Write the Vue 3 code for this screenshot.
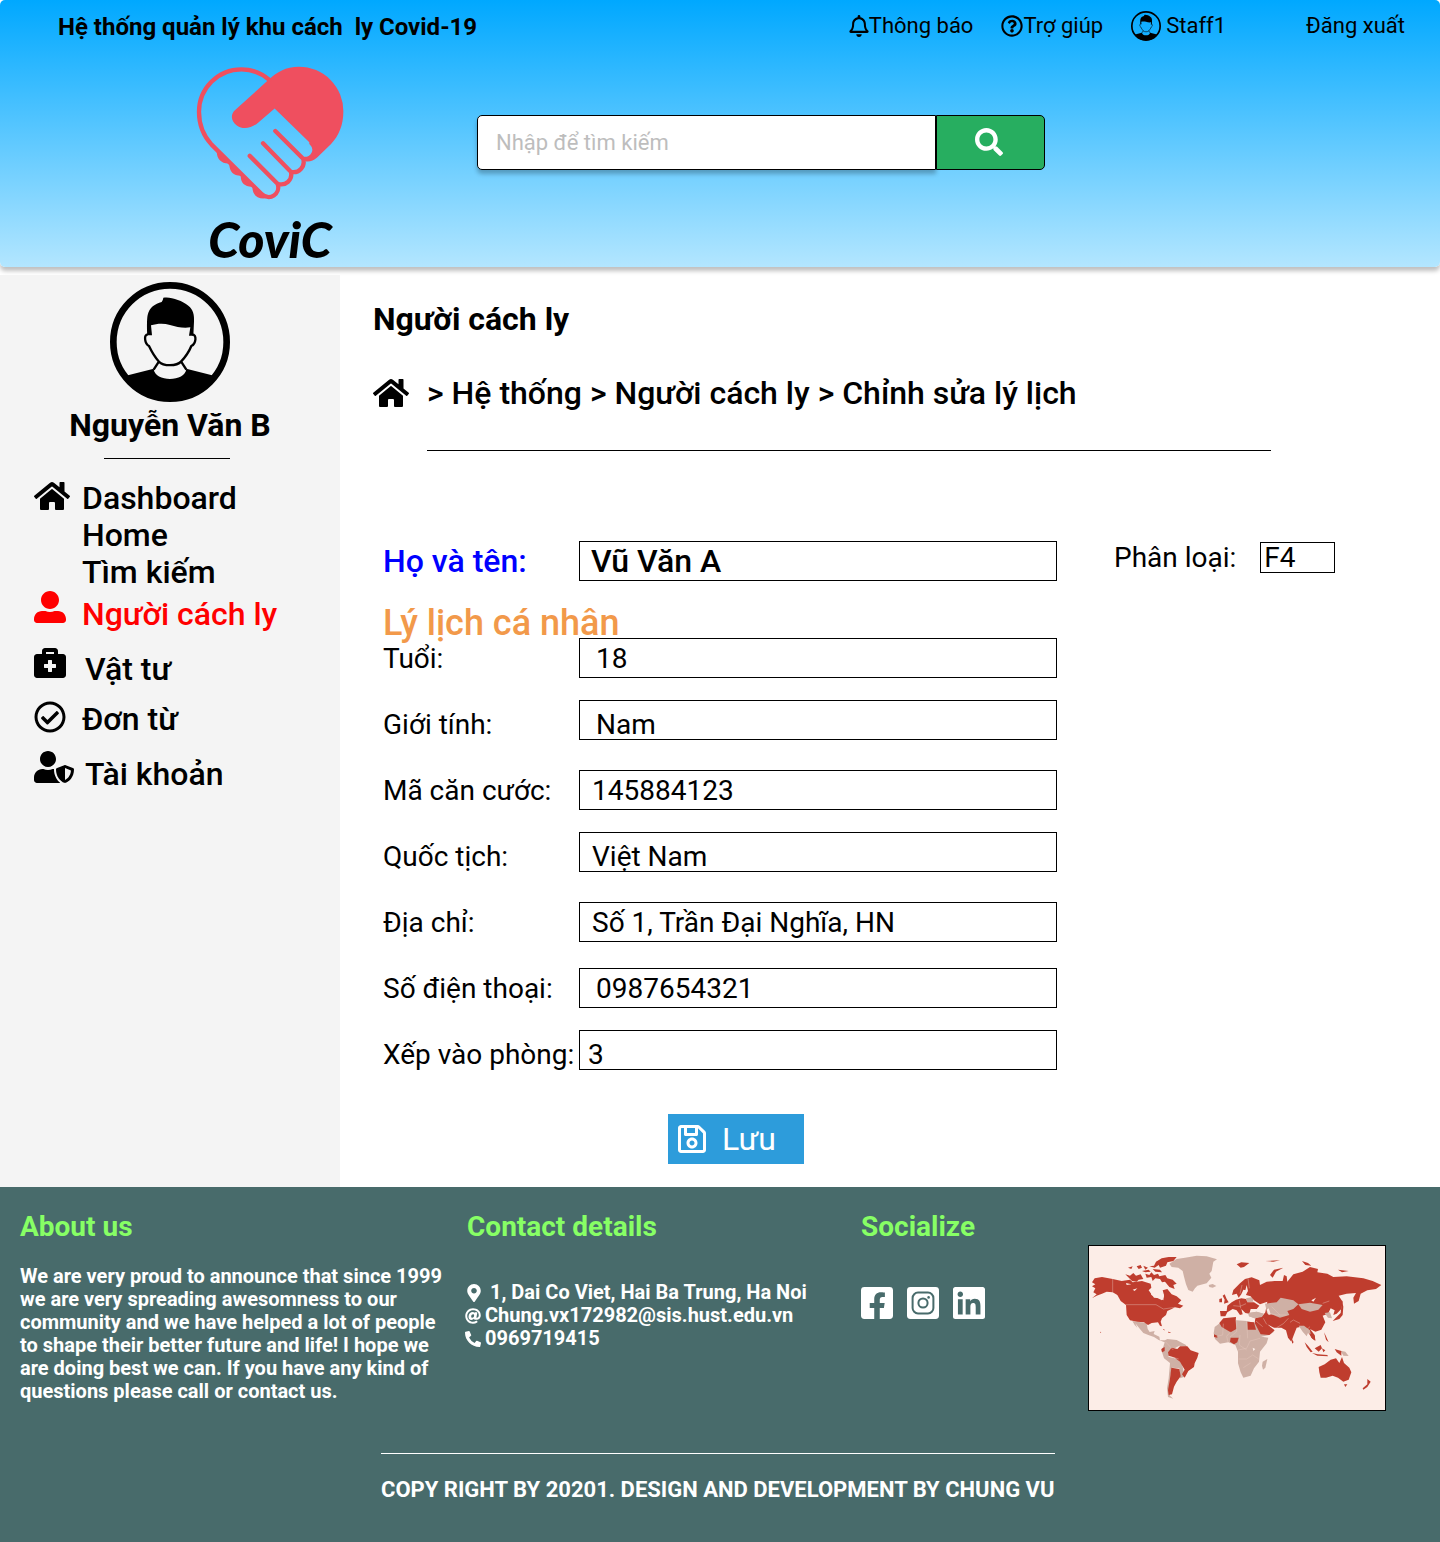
<script setup>
import { ref, reactive } from 'vue'

const icons = {
  bell: { box: '0 0 448 512', d: 'M439.39 362.29c-19.32-20.76-55.47-51.99-55.47-154.29 0-77.7-54.48-139.9-127.94-155.16V32c0-17.67-14.32-32-31.98-32s-31.98 14.33-31.98 32v20.84C118.56 68.1 64.08 130.3 64.08 208c0 102.3-36.15 133.53-55.47 154.29-6 6.45-8.66 14.16-8.61 21.71.11 16.4 12.98 32 32.1 32h383.8c19.12 0 32-15.6 32.1-32 .05-7.55-2.61-15.27-8.61-21.71zM67.53 368c21.22-27.97 44.42-74.33 44.53-159.42 0-.2-.06-.38-.06-.58 0-61.86 50.14-112 112-112s112 50.14 112 112c0 .2-.06.38-.06.58.11 85.1 23.31 131.46 44.53 159.42H67.53zM224 512c35.32 0 63.97-28.65 63.97-64H160.03c0 35.35 28.65 64 63.97 64z' },
  help: { box: '0 0 512 512', d: 'M256 8C119.043 8 8 119.083 8 256c0 136.997 111.043 248 248 248s248-111.003 248-248C504 119.083 392.957 8 256 8zm0 448c-110.532 0-200-89.431-200-200 0-110.495 89.472-200 200-200 110.491 0 200 89.471 200 200 0 110.53-89.431 200-200 200zm107.244-255.2c0 67.052-72.421 68.084-72.421 92.863V300c0 6.627-5.373 12-12 12h-45.647c-6.627 0-12-5.373-12-12v-8.659c0-35.745 27.1-50.034 47.579-61.516 17.561-9.845 28.324-16.541 28.324-29.579 0-17.246-21.999-28.693-39.784-28.693-23.189 0-33.894 10.977-48.942 29.969-4.057 5.12-11.46 6.071-16.666 2.124l-27.824-21.098c-5.107-3.872-6.251-11.066-2.644-16.363C184.846 131.491 214.94 112 261.794 112c49.071 0 101.45 38.304 101.45 88.8zM298 368c0 23.159-18.841 42-42 42s-42-18.841-42-42 18.841-42 42-42 42 18.841 42 42z' },
  search: { box: '0 0 512 512', d: 'M505 442.7L405.3 343c-4.5-4.5-10.6-7-17-7H372c27.6-35.3 44-79.7 44-128C416 93.1 322.9 0 208 0S0 93.1 0 208s93.1 208 208 208c48.3 0 92.7-16.4 128-44v16.3c0 6.4 2.5 12.5 7 17l99.7 99.7c9.4 9.4 24.6 9.4 33.9 0l28.3-28.3c9.4-9.4 9.4-24.6.1-34zM208 336c-70.7 0-128-57.2-128-128 0-70.7 57.2-128 128-128 70.7 0 128 57.2 128 128 0 70.7-57.2 128-128 128z' },
  home: { box: '0 0 576 512', d: 'M280.37 148.26L96 300.11V464a16 16 0 0 0 16 16l112.06-.29a16 16 0 0 0 15.92-16V368a16 16 0 0 1 16-16h64a16 16 0 0 1 16 16v95.64a16 16 0 0 0 16 16.05L464 480a16 16 0 0 0 16-16V300L295.67 148.26a12.19 12.19 0 0 0-15.3 0zM571.6 251.47L488 182.56V44.05a12 12 0 0 0-12-12h-56a12 12 0 0 0-12 12v72.61L318.47 43a48 48 0 0 0-61 0L4.34 251.47a12 12 0 0 0-1.6 16.9l25.5 31A12 12 0 0 0 45.15 301l235.22-193.74a12.19 12.19 0 0 1 15.3 0L530.9 301a12 12 0 0 0 16.9-1.6l25.5-31a12 12 0 0 0-1.7-16.93z' },
  user: { box: '0 0 512 512', d: 'M256 288c79.5 0 144-64.5 144-144S335.5 0 256 0 112 64.5 112 144s64.5 144 144 144zm128 32h-55.1c-22.2 10.2-46.9 16-72.9 16s-50.6-5.8-72.9-16H128C57.3 320 0 377.3 0 448v16c0 26.5 21.5 48 48 48h416c26.5 0 48-21.5 48-48v-16c0-70.7-57.3-128-128-128z' },
  medical: { box: '0 0 512 512', d: 'M464 128h-80V80c0-26.5-21.5-48-48-48H176c-26.5 0-48 21.5-48 48v48H48c-26.5 0-48 21.5-48 48v288c0 26.5 21.5 48 48 48h416c26.5 0 48-21.5 48-48V176c0-26.5-21.5-48-48-48zM192 96h128v32H192V96zm160 248c0 4.4-3.6 8-8 8h-56v56c0 4.4-3.6 8-8 8h-48c-4.4 0-8-3.6-8-8v-56h-56c-4.4 0-8-3.6-8-8v-48c0-4.4 3.6-8 8-8h56v-56c0-4.4 3.6-8 8-8h48c4.4 0 8 3.6 8 8v56h56c4.4 0 8 3.6 8 8v48z' },
  check: { box: '0 0 512 512', d: 'M256 8C119.033 8 8 119.033 8 256s111.033 248 248 248 248-111.033 248-248S392.967 8 256 8zm0 48c110.532 0 200 89.451 200 200 0 110.532-89.451 200-200 200-110.532 0-200-89.451-200-200 0-110.532 89.451-200 200-200m140.204 130.267l-22.536-22.718c-4.667-4.705-12.265-4.736-16.97-.068L215.346 303.697l-59.792-60.277c-4.667-4.705-12.265-4.736-16.97-.069l-22.719 22.536c-4.705 4.667-4.736 12.265-.068 16.971l90.781 91.516c4.667 4.705 12.265 4.736 16.97.068l172.589-171.204c4.704-4.668 4.734-12.266.067-16.971z' },
  shield: { box: '0 0 640 512', d: 'M622.3 271.1l-115.2-45c-4.1-1.6-12.6-3.7-22.2 0l-115.2 45c-10.7 4.2-17.7 14-17.7 24.9 0 111.6 68.7 188.8 132.9 213.9 9.6 3.7 18 1.6 22.2 0C558.4 489.9 640 420.5 640 296c0-10.9-7-20.7-17.7-24.9zM496 462.4V273.3l95.5 37.3c-5.6 87.1-60.9 135.4-95.5 151.8zM224 256c70.7 0 128-57.3 128-128S294.7 0 224 0 96 57.3 96 128s57.3 128 128 128zm96 40c0-2.5.8-4.8 1.1-7.2-2.5-.1-4.9-.8-7.5-.8h-16.7c-22.2 10.2-46.9 16-72.9 16s-50.6-5.8-72.9-16h-16.7C60.2 288 0 348.2 0 422.4V464c0 26.5 21.5 48 48 48h352c6.8 0 13.3-1.5 19.2-4-54-42.9-99.2-116.7-99.2-212z' },
  save: { box: '0 32 448 448', d: 'M433.941 129.941l-83.882-83.882A48 48 0 0 0 316.118 32H48C21.49 32 0 53.49 0 80v352c0 26.51 21.49 48 48 48h352c26.51 0 48-21.49 48-48V163.882a48 48 0 0 0-14.059-33.941zM272 80v80H144V80h128zm122 352H54a6 6 0 0 1-6-6V86a6 6 0 0 1 6-6h42v104c0 13.255 10.745 24 24 24h176c13.255 0 24-10.745 24-24V83.882l78.243 78.243a6 6 0 0 1 1.757 4.243V426a6 6 0 0 1-6 6zM224 232c-48.523 0-88 39.477-88 88s39.477 88 88 88 88-39.477 88-88-39.477-88-88-88zm0 128c-22.056 0-40-17.944-40-40s17.944-40 40-40 40 17.944 40 40-17.944 40-40 40z' },
  marker: { box: '0 0 384 512', d: 'M172.268 501.67C26.97 291.031 0 269.413 0 192 0 85.961 85.961 0 192 0s192 85.961 192 192c0 77.413-26.97 99.031-172.268 309.67-9.535 13.774-29.93 13.773-39.464 0zM192 272c44.183 0 80-35.817 80-80s-35.817-80-80-80-80 35.817-80 80 35.817 80 80 80z' },
  at: { box: '0 0 512 512', d: 'M256 8C118.941 8 8 118.919 8 256c0 137.058 110.919 248 248 248 48.154 0 95.342-14.14 135.408-40.223 12.005-7.815 14.625-24.288 5.552-35.372l-10.177-12.433c-7.671-9.371-21.179-11.667-31.373-5.129C325.92 429.757 291.314 440 256 440c-101.458 0-184-82.542-184-184S154.542 72 256 72c100.139 0 184 57.619 184 160 0 38.786-21.093 79.742-58.17 83.693-17.349-.454-16.91-12.857-13.476-30.024l23.433-121.11C394.653 149.75 383.308 136 368.225 136h-44.981a13.518 13.518 0 0 0-13.432 11.993l-.01.092c-14.697-17.901-40.448-21.775-59.971-21.775-74.58 0-137.831 62.234-137.831 151.46 0 65.303 36.785 105.87 96 105.87 26.984 0 57.369-15.637 74.991-38.333 9.522 34.104 40.613 34.103 70.71 34.103C462.609 379.41 504 307.798 504 232 504 95.653 394.023 8 256 8zm-21.68 304.43c-22.249 0-36.07-15.623-36.07-40.771 0-44.993 30.779-72.729 58.63-72.729 22.292 0 35.601 15.241 35.601 40.77 0 45.061-33.875 72.73-58.161 72.73z' },
  phone: { box: '0 0 512 512', d: 'M497.39 361.8l-112-48a24 24 0 0 0-28 6.9l-49.6 60.6A370.66 370.66 0 0 1 130.6 204.11l60.6-49.6a23.94 23.94 0 0 0 6.9-28l-48-112A24.16 24.16 0 0 0 122.6.61l-104 24A24 24 0 0 0 0 48c0 256.5 207.9 464 464 464a24 24 0 0 0 23.4-18.6l24-104a24.29 24.29 0 0 0-14.01-27.6z' },
  facebook: { box: '0 32 448 448', d: 'M400 32H48A48 48 0 0 0 0 80v352a48 48 0 0 0 48 48h137.25V327.69h-63V256h63v-54.64c0-62.15 37-96.48 93.67-96.48 27.14 0 55.52 4.84 55.52 4.84v61h-31.27c-30.81 0-40.42 19.12-40.42 38.73V256h68.78l-11 71.69h-57.78V480H400a48 48 0 0 0 48-48V80a48 48 0 0 0-48-48z' },
  linkedin: { box: '0 32 448 448', d: 'M416 32H31.9C14.3 32 0 46.5 0 64.3v383.4C0 465.5 14.3 480 31.9 480H416c17.6 0 32-14.5 32-32.3V64.3c0-17.8-14.4-32.3-32-32.3zM135.4 416H69V202.2h66.5V416zm-33.2-243c-21.3 0-38.5-17.3-38.5-38.5S80.9 96 102.2 96c21.2 0 38.5 17.3 38.5 38.5 0 21.3-17.2 38.5-38.5 38.5zm282.1 243h-66.4V312c0-24.8-.5-56.7-34.5-56.7-34.6 0-39.9 27-39.9 54.9V416h-66.4V202.2h63.7v29.2h.9c8.9-16.8 30.6-34.5 62.9-34.5 67.2 0 79.7 44.3 79.7 101.9V416z' }
}

const menu = [
  { label: 'Người cách ly', icon: 'user', kind: 'active low' },
  { label: 'Vật tư', icon: 'medical', kind: 'low' },
  { label: 'Đơn từ', icon: 'check', kind: '' },
  { label: 'Tài khoản', icon: 'shield', kind: 'low' }
]

const query = ref('')
const fullName = ref('Vũ Văn A')
const category = ref('F4')
const fields = reactive([
  { id: 'age', label: 'Tuổi:', value: '18', kind: 'inset' },
  { id: 'gender', label: 'Giới tính:', value: 'Nam', kind: 'inset raised' },
  { id: 'idcard', label: 'Mã căn cước:', value: '145884123', kind: '' },
  { id: 'nation', label: 'Quốc tịch:', value: 'Việt Nam', kind: 'raised' },
  { id: 'address', label: 'Địa chỉ:', value: 'Số 1, Trần Đại Nghĩa, HN', kind: '' },
  { id: 'tel', label: 'Số điện thoại:', value: '0987654321', kind: 'inset' },
  { id: 'room', label: 'Xếp vào phòng:', value: '3', kind: 'raised tight' }
])
</script>

<template>
  <div class="page">
    <svg class="defs" aria-hidden="true">
      <symbol id="avatar" viewBox="330 51 360 360">
        <circle cx="510" cy="231" r="170" fill="none" stroke="currentColor" stroke-width="20" />
        <path fill="currentColor" d="M442 211C441 196 440 165 443 150C448 128 465 116 485 111Q489 106 490 98C512 94 545 106 565 122C580 134 583 150 582 170L580 212H567L571 187C550 190 530 186 510 180C490 174 470 176 453 181L456 211Z" />
        <path fill="none" stroke="currentColor" stroke-width="7" d="M444 208C430 208 434 236 447 243C454 258 466 278 477 290C490 304 530 304 543 290C556 276 568 258 574 243C588 236 592 208 576 208M477 289L461 314M543 289L559 314" />
        <path fill="currentColor" d="M378 332L461 311C464 352 556 352 559 311L642 332C610 380 565 406 510 406C455 406 410 380 378 332Z" />
      </symbol>
    </svg>

    <header class="header">
      <div class="topbar">
        <strong class="system">Hệ thống quản lý khu cách&nbsp; ly Covid-19</strong>
        <nav class="tools">
          <a href="#"><svg class="bell" :viewBox="icons.bell.box"><path :d="icons.bell.d" /></svg>Thông báo</a>
          <a href="#"><svg class="help" :viewBox="icons.help.box"><path :d="icons.help.d" /></svg>Trợ giúp</a>
          <a href="#"><svg class="face"><use href="#avatar" /></svg>Staff1</a>
          <a href="#" class="logout">Đăng xuất</a>
        </nav>
      </div>
      <div class="brandbar">
        <a href="#" class="brand" aria-label="CoviC">
          <svg class="heart" viewBox="48 48 446 402">
            <path fill="#ef4f5f" d="M265 90C290 65 320 49 358 49A134 134 0 0 1 492 185C492 225 478 258 455 282L413 323C403 333 392 336 380 335L370 326C392 324 408 305 401 288L285 175L236 217C218 234 190 240 172 227C153 213 151 194 166 180Z" />
            <path fill="#ef4f5f" d="M111 298C108 325 122 342 148 341C149 367 160 377 183 378C182 398 195 412 218 411C218 435 232 449 258 446L252 432Z" />
            <g fill="none" stroke="#ef4f5f" stroke-width="13" stroke-linecap="round" stroke-linejoin="round">
              <path d="M268 88C242 66 216 57 185 57A128 128 0 0 0 57 185C57 225 70 257 95 284L245 432C270 456 304 432 294 402C318 410 340 390 334 366C358 372 378 350 371 327C398 330 417 300 396 280" />
              <path d="M210 318L290 398M250 280L330 362M287 243L367 323" />
            </g>
          </svg>
          <span class="wordmark">CoviC</span>
        </a>
        <form class="search" role="search" @submit.prevent>
          <input v-model="query" type="search" placeholder="Nhập để tìm kiếm" aria-label="Nhập để tìm kiếm" />
          <button type="submit" aria-label="Tìm kiếm"><svg :viewBox="icons.search.box"><path :d="icons.search.d" /></svg></button>
        </form>
      </div>
    </header>

    <div class="body">
      <aside class="sidebar">
        <svg class="portrait"><use href="#avatar" /></svg>
        <p class="name">Nguyễn Văn B</p>
        <hr />
        <ul class="menu">
          <li class="top">
            <svg class="house" :viewBox="icons.home.box"><path :d="icons.home.d" /></svg>
            <div class="links">
              <a href="#">Dashboard</a>
              <a href="#">Home</a>
              <a href="#">Tìm kiếm</a>
            </div>
          </li>
          <li v-for="item in menu" :key="item.label" :class="item.kind">
            <svg :class="item.icon" :viewBox="icons[item.icon].box"><path :d="icons[item.icon].d" /></svg>
            <a href="#">{{ item.label }}</a>
          </li>
        </ul>
      </aside>

      <main class="content">
        <h1>Người cách ly</h1>
        <nav class="crumbs">
          <a href="#" aria-label="Home"><svg class="house" :viewBox="icons.home.box"><path :d="icons.home.d" /></svg></a>
          <span>&gt; <a href="#">Hệ thống</a> &gt; <a href="#">Người cách ly</a> &gt; <a href="#">Chỉnh sửa lý lịch</a></span>
        </nav>
        <hr />
        <form class="profile" @submit.prevent>
          <div class="columns">
            <div class="main-fields">
              <div class="row fullname">
                <label for="fullname">Họ và tên:</label>
                <input id="fullname" v-model="fullName" type="text" />
              </div>
              <h2>Lý lịch cá nhân</h2>
              <div class="rows">
                <div v-for="f in fields" :key="f.id" class="row" :class="f.kind">
                  <label :for="f.id">{{ f.label }}</label>
                  <input :id="f.id" v-model="f.value" type="text" />
                </div>
              </div>
            </div>
            <div class="category">
              <label for="category">Phân loại:</label>
              <input id="category" v-model="category" type="text" />
            </div>
          </div>
          <button class="save" type="submit">
            <svg :viewBox="icons.save.box"><path :d="icons.save.d" /></svg>Lưu
          </button>
        </form>
      </main>
    </div>

    <footer class="footer">
      <div class="footer-grid">
        <section class="about">
          <h3>About us</h3>
          <p>We are very proud to announce that since 1999 we are very spreading awesomness to our community and we have helped a lot of people to shape their better future and life! I hope we are doing best we can. If you have any kind of questions please call or contact us.</p>
        </section>
        <section class="contact">
          <h3>Contact details</h3>
          <address>
            <span class="place"><svg :viewBox="icons.marker.box"><path :d="icons.marker.d" /></svg>1, Dai Co Viet, Hai Ba Trung, Ha Noi</span>
            <a href="mailto:Chung.vx172982@sis.hust.edu.vn"><svg :viewBox="icons.at.box"><path :d="icons.at.d" /></svg>Chung.vx172982@sis.hust.edu.vn</a>
            <a href="tel:0969719415"><svg :viewBox="icons.phone.box"><path :d="icons.phone.d" /></svg>0969719415</a>
          </address>
        </section>
        <section class="social">
          <h3>Socialize</h3>
          <div class="networks">
            <a href="#" aria-label="Facebook"><svg :viewBox="icons.facebook.box"><path :d="icons.facebook.d" /></svg></a>
            <a href="#" aria-label="Instagram">
              <svg viewBox="0 0 32 32">
                <rect width="32" height="32" rx="3.4" />
                <g fill="none" stroke="#486b6b" stroke-width="2">
                  <rect x="5.6" y="5.6" width="20.8" height="20.8" rx="5.4" />
                  <circle cx="16" cy="16" r="4.6" />
                </g>
                <circle cx="21.6" cy="10.4" r="1.3" fill="#486b6b" />
              </svg>
            </a>
            <a href="#" aria-label="LinkedIn"><svg :viewBox="icons.linkedin.box"><path :d="icons.linkedin.d" /></svg></a>
          </div>
        </section>
        <svg class="map" viewBox="27 33 888 492" role="img" aria-label="World map">
          <g fill="#cfb0a5">
            <path d="M268 86L290 72L315 68L350 62L380 64L411 73L400 80L395 108L388 116L394 128L380 145L352 152L345 160L338 170L325 165L318 148L312 125L308 108L295 98L275 96Z" />
            <path d="M386 150L398 147L409 153L398 158L388 156Z" />
            <path d="M157 258L178 261L200 265L203 282L209 291L224 288L221 297L238 305L240 316L255 316L262 312L290 315L318 330L320 336L298 332L275 345L265 365L292 372L306 385L310 405L314 425L300 430L298 400L276 398L270 430L267 460L270 482L280 491L264 486L261 460L266 430L270 384L252 370L244 345L250 335L254 322L236 315L222 306L205 300L190 294L178 280L166 265L172 278L164 270Z" />
            <path d="M420 264L470 256L500 258L526 264L532 285L545 305L565 308L560 325L540 350L537 380L522 400L512 422L490 428L482 412L474 385L474 350L466 330L445 322L420 326L405 312L401 295L404 276Z" />
            <path d="M548 380L562 372L556 398L549 404L546 392Z" />
            <path d="M505 234L530 230L551 236L546 246L524 250L507 244ZM498 190L518 186L520 200L502 202ZM782 347L796 350L806 363L790 362Z" />
            <path d="M524 275L540 306L568 300L582 290L560 268L540 250L528 256Z" />
          </g>
          <g fill="#bf3d2e">
            <path d="M36 142L44 130L66 126L98 132L125 138L150 134L158 142L186 138L212 146L214 158L206 166L222 188L240 190L250 196L252 180L248 166L262 162L275 178L290 184L304 196L294 206L310 212L300 220L285 217L275 222L262 228L258 240L246 250L242 260L246 274L240 272L234 262L215 264L204 270L192 262L172 260L150 256L140 240L138 210L122 198L112 180L98 172L80 170L66 176L50 182L36 190L50 178L40 172L46 160L36 154L46 148Z" />
            <path d="M136 118L150 122L160 114L168 122L182 118L190 132L176 134L170 140L156 138ZM196 116L208 120L214 112L222 120L234 116L238 124L256 120L262 130L278 134L290 146L280 150L284 162L268 156L255 140L246 142L240 132L226 130L218 138L214 126L200 128ZM208 94L222 92L228 80L245 70L266 66L290 66L280 78L262 82L258 92L240 98L236 90L224 98ZM144 98L158 94L154 102ZM170 94L182 90L186 98L176 102ZM190 92L204 98L196 104ZM186 108L206 104L212 110L196 112ZM218 102L240 104L246 112L226 110Z" />
            <path d="M244 342L254 336L254 348L246 352ZM264 352L275 338L292 342L300 334L322 334L332 346L356 354L352 368L344 385L342 396L325 408L314 428L306 418L314 404L300 380L284 368L266 362ZM274 398L298 402L302 424L290 440L282 455L276 478L266 480L264 466L270 430Z" />
            <path d="M418 264L430 250L468 246L467 258L469 282L452 292L425 276ZM402 298L412 302L412 308L402 306ZM452 308L476 308L472 322L462 328L450 320ZM502 260L522 262L528 284L503 284Z" />
            <path d="M420 228L440 228L442 212L455 202L468 194L484 190L498 192L502 202L522 202L538 212L530 222L512 222L508 236L496 234L484 222L488 238L480 240L470 226L458 222L442 232L436 244L422 244ZM428 182L434 178L440 192L446 202L432 206L434 194ZM418 192L426 190L426 202L418 202Z" />
            <path d="M456 180L460 165L480 145L495 132L515 127L538 136L540 150L560 140L584 138L608 138L612 120L620 124L622 140L640 118L668 110L690 96L714 102L712 112L742 116L760 126L800 124L850 130L878 138L904 150L888 162L862 166L842 176L836 198L822 206L820 188L828 174L800 176L776 182L788 200L784 222L770 236L760 240L764 226L752 220L744 236L728 242L736 262L724 284L706 290L690 282L704 300L706 316L698 312L684 292L674 280L660 276L650 278L640 304L634 320L624 308L618 286L604 278L582 278L562 268L584 286L568 300L542 298L524 264L526 250L548 242L556 232L562 200L540 208L522 196L512 184L498 180L500 166L490 164L484 178L476 188L470 176Z" />
            <path d="M470 88L484 82L508 84L492 96L482 98ZM570 120L582 104L610 98L588 110L578 128ZM666 78L684 84L694 92L676 90ZM774 104L806 108L786 112ZM556 78L600 76L580 80Z" />
            <path d="M786 196L790 215L788 240L778 252L758 258L772 244L782 234ZM674 322L684 332L698 350L692 352L680 336ZM704 340L722 330L726 340L716 350ZM696 354L714 358L742 360L744 364L712 362ZM732 292L738 304L746 322L738 314ZM726 340L736 346L730 352ZM764 342L784 348L784 362L770 352ZM688 294L704 302L706 318L694 308ZM636 312L641 322L636 326Z" />
            <path d="M716 396L734 388L752 374L768 370L778 384L786 366L792 384L808 398L814 412L806 434L790 440L774 428L758 422L738 428L722 428L718 412ZM792 448L802 448L796 456ZM862 432L872 440L862 456L850 464L848 460L862 448Z" />
            <path d="M264 290L274 292L266 294ZM60 290L64 292L60 293ZM250 282L256 286L250 285Z" />
          </g>
          <path fill="#cfb0a5" d="M555 206L590 202L602 188L640 196L655 208L640 222L622 228L628 240L600 248L580 240L562 236ZM655 208L690 203L728 210L715 224L690 230L665 222ZM656 272L672 272L690 286L692 298L684 294L680 304L668 290ZM734 234L750 232L756 250L744 248ZM505 234L530 230L551 236L546 246L524 250L507 244Z" />
          <path fill="#fcede7" d="M212 170L232 158L246 168L252 184L246 196L234 190L214 180ZM138 144L154 148L140 150ZM158 164L172 160L164 168ZM560 224L566 220L572 238L566 240ZM518 338L526 342L520 348ZM694 196L708 188L700 200ZM484 178L496 166L500 150L504 168L496 182Z" />
          <g fill="none" stroke="#e9c9bf" stroke-width="1.2">
            <path d="M98 132V172M138 209H228L250 222L285 217M470 256V290L450 306M500 258L503 310M430 266L428 300L410 304M474 345L500 340L510 318L540 310M476 372H500L518 360L536 372M490 398L512 384M480 300L478 330L500 345M452 290L440 304L444 322M256 320L280 345M268 364L296 372M560 232L590 240L620 240M575 215L600 240M625 250L610 266L590 278M528 258L548 275M550 250L560 268M660 265L640 255L630 262M728 205L748 198M460 212L480 214L498 206M478 196L482 220M504 130L508 160M680 284L690 275M486 150L480 176" />
          </g>
        </svg>
      </div>
      <p class="copyright">COPY RIGHT BY 20201. DESIGN AND DEVELOPMENT BY CHUNG VU</p>
    </footer>
  </div>
</template>

<style>
body {
  margin: 0;
  background: #fff;
}
</style>

<style scoped>
.page {
  font-family: Roboto, "Noto Sans", sans-serif;
  color: #000;
}
.page * {
  box-sizing: border-box;
}
a {
  color: inherit;
  text-decoration: none;
}
svg {
  display: block;
  flex: none;
  fill: currentColor;
}
input,
button {
  font-family: inherit;
  color: inherit;
  border-radius: 0;
  margin: 0;
}
h1, h2, h3, p, ul {
  margin: 0;
  padding: 0;
}
hr {
  border: 0;
  height: 1px;
  margin: 0;
  background: #000;
}
.defs {
  position: absolute;
  width: 0;
  height: 0;
}

.header {
  height: 267px;
  border-radius: 5px;
  background: linear-gradient(#00a8ff, #b3e6ff);
  box-shadow: 0 4px 4px rgba(0, 0, 0, 0.25);
}
.topbar {
  display: flex;
  justify-content: space-between;
  align-items: center;
  height: 54px;
  padding: 0 35px 0 58px;
}
.system {
  font-size: 24px;
  font-weight: 700;
}
.tools {
  display: flex;
  align-items: center;
  padding-bottom: 3px;
  font-size: 22px;
}
.tools a {
  display: flex;
  align-items: center;
  margin-left: 28px;
}
.bell {
  width: 20px;
  height: 22px;
}
.help {
  width: 22px;
  height: 22px;
}
.face {
  width: 30px;
  height: 30px;
  margin-right: 5px;
}
.tools .logout {
  margin-left: 80px;
}
.brandbar {
  display: flex;
  align-items: flex-start;
  padding: 12px 32px 0 196px;
}
.brand {
  display: flex;
  flex-direction: column;
  align-items: center;
  width: 148px;
}
.heart {
  width: 148px;
  height: 134px;
}
.wordmark {
  margin-top: 12px;
  font-family: Lato, sans-serif;
  font-size: 50px;
  line-height: 54px;
  font-weight: 900;
  font-style: italic;
}
.search {
  display: flex;
  margin: 49px 0 0 133px;
}
.search input {
  width: 459px;
  height: 55px;
  padding: 0 18px;
  border: 1px solid #000;
  border-radius: 5px 0 0 5px;
  background: #fff;
  font-size: 22px;
  box-shadow: 0 4px 4px rgba(0, 0, 0, 0.25);
  appearance: none;
}
.search input::placeholder {
  color: #bdbdbd;
}
.search button {
  display: flex;
  align-items: center;
  justify-content: center;
  width: 109px;
  padding: 0 3px 2px 0;
  border: 1px solid #000;
  border-radius: 0 5px 5px 0;
  background: #27ae60;
  color: #fff;
}
.search svg {
  width: 28px;
  height: 28px;
}

.body {
  display: flex;
  margin-top: 8px;
}
.sidebar {
  flex: none;
  width: 340px;
  padding-top: 7px;
  background: #f4f4f4;
}
.portrait {
  width: 120px;
  height: 120px;
  margin: 0 auto;
}
.name {
  font-size: 32px;
  line-height: 46px;
  font-weight: 700;
  text-align: center;
}
.sidebar hr {
  width: 126px;
  margin: 10px 0 0 104px;
}
.menu {
  margin-top: 21px;
  padding-left: 34px;
  list-style: none;
  font-size: 32px;
  line-height: 36px;
  font-weight: 500;
}
.menu li {
  display: flex;
  align-items: flex-start;
  margin-bottom: 14px;
}
.menu svg {
  height: 32px;
  width: 32px;
  margin-right: 16px;
}
.menu .top {
  margin-bottom: 0;
}
.menu .house {
  width: 36px;
  margin-right: 12px;
}
.menu .shield {
  width: 40px;
  margin-right: 11px;
}
.menu .medical {
  margin-right: 19px;
}
.links {
  display: flex;
  flex-direction: column;
  line-height: 37px;
}
.menu .low a {
  padding-top: 5px;
}
.active {
  color: #f00;
}

.content {
  flex: 1;
  min-width: 0;
  padding: 25px 32px 23px 33px;
}
h1 {
  font-size: 32px;
  line-height: 38px;
  font-weight: 700;
}
.crumbs {
  display: flex;
  align-items: center;
  gap: 18px;
  margin-top: 36px;
  font-size: 32px;
  line-height: 38px;
  font-weight: 500;
}
.crumbs .house {
  width: 36px;
  height: 32px;
}
.content hr {
  width: 844px;
  max-width: 85%;
  margin: 38px 0 0 54px;
}
.profile {
  margin: 90px 0 0 10px;
}
.columns {
  display: flex;
  gap: 57px;
}
.row {
  display: flex;
  align-items: center;
  height: 34px;
  font-size: 28px;
}
.row label {
  flex: none;
  width: 196px;
  white-space: nowrap;
}
.row input {
  width: 478px;
  height: 40px;
  padding: 0 12px;
  border: 1px solid #000;
  background: #fff;
  font-size: 28px;
}
.fullname {
  height: 40px;
  font-size: 32px;
  font-weight: 500;
}
.fullname label {
  color: #00f;
}
.fullname input {
  padding: 0 11px;
  font-size: 32px;
  font-weight: 500;
}
h2 {
  margin-top: 24px;
  font-size: 36px;
  line-height: 36px;
  font-weight: 500;
  color: #f2994a;
}
.rows {
  display: flex;
  flex-direction: column;
  gap: 32px;
}
.inset input {
  padding-left: 16px;
}
.tight input {
  padding-left: 8px;
}
.raised input {
  margin-bottom: 8px;
  padding-top: 8px;
}
.category {
  display: flex;
  align-items: center;
  gap: 24px;
  height: 32px;
  font-size: 28px;
  white-space: nowrap;
}
.category input {
  width: 75px;
  height: 31px;
  padding: 0 3px;
  border: 1px solid #000;
  background: #fff;
  font-size: 28px;
}
.save {
  display: flex;
  align-items: center;
  gap: 16px;
  width: 136px;
  height: 50px;
  margin: 43px 0 0 285px;
  padding: 0 10px;
  border: 0;
  background: #2d9cdb;
  color: #fff;
  font-size: 32px;
}
.save svg {
  width: 28px;
  height: 28px;
}

.footer {
  padding: 24px 20px 40px;
  background: #486b6b;
  color: #fff;
  font-weight: 700;
}
.footer-grid {
  display: grid;
  grid-template-columns: 447fr 394fr 227fr 332fr;
}
h3 {
  font-size: 28px;
  line-height: 32px;
  font-weight: 700;
  color: #87ff65;
}
.about p {
  max-width: 430px;
  margin-top: 22px;
  font-size: 20px;
  line-height: 23px;
}
address {
  display: flex;
  flex-direction: column;
  margin: 38px 0 0 -2px;
  font-size: 20px;
  line-height: 23px;
  font-style: normal;
}
address > * {
  display: flex;
  align-items: center;
}
address svg {
  width: 16px;
  height: 18px;
  margin-right: 4px;
}
.place {
  padding-left: 1px;
}
.place svg {
  margin-right: 8px;
}
.networks {
  display: flex;
  gap: 14px;
  margin-top: 44px;
}
.networks svg {
  width: 32px;
  height: 32px;
}
.map {
  width: 298px;
  height: 166px;
  margin-top: 34px;
  border: 1px solid #000;
  background: #fcede7;
}
.copyright {
  width: fit-content;
  margin: 42px 0 0 361px;
  padding-top: 22px;
  border-top: 1px solid #fff;
  font-size: 22px;
  line-height: 28px;
}
</style>
